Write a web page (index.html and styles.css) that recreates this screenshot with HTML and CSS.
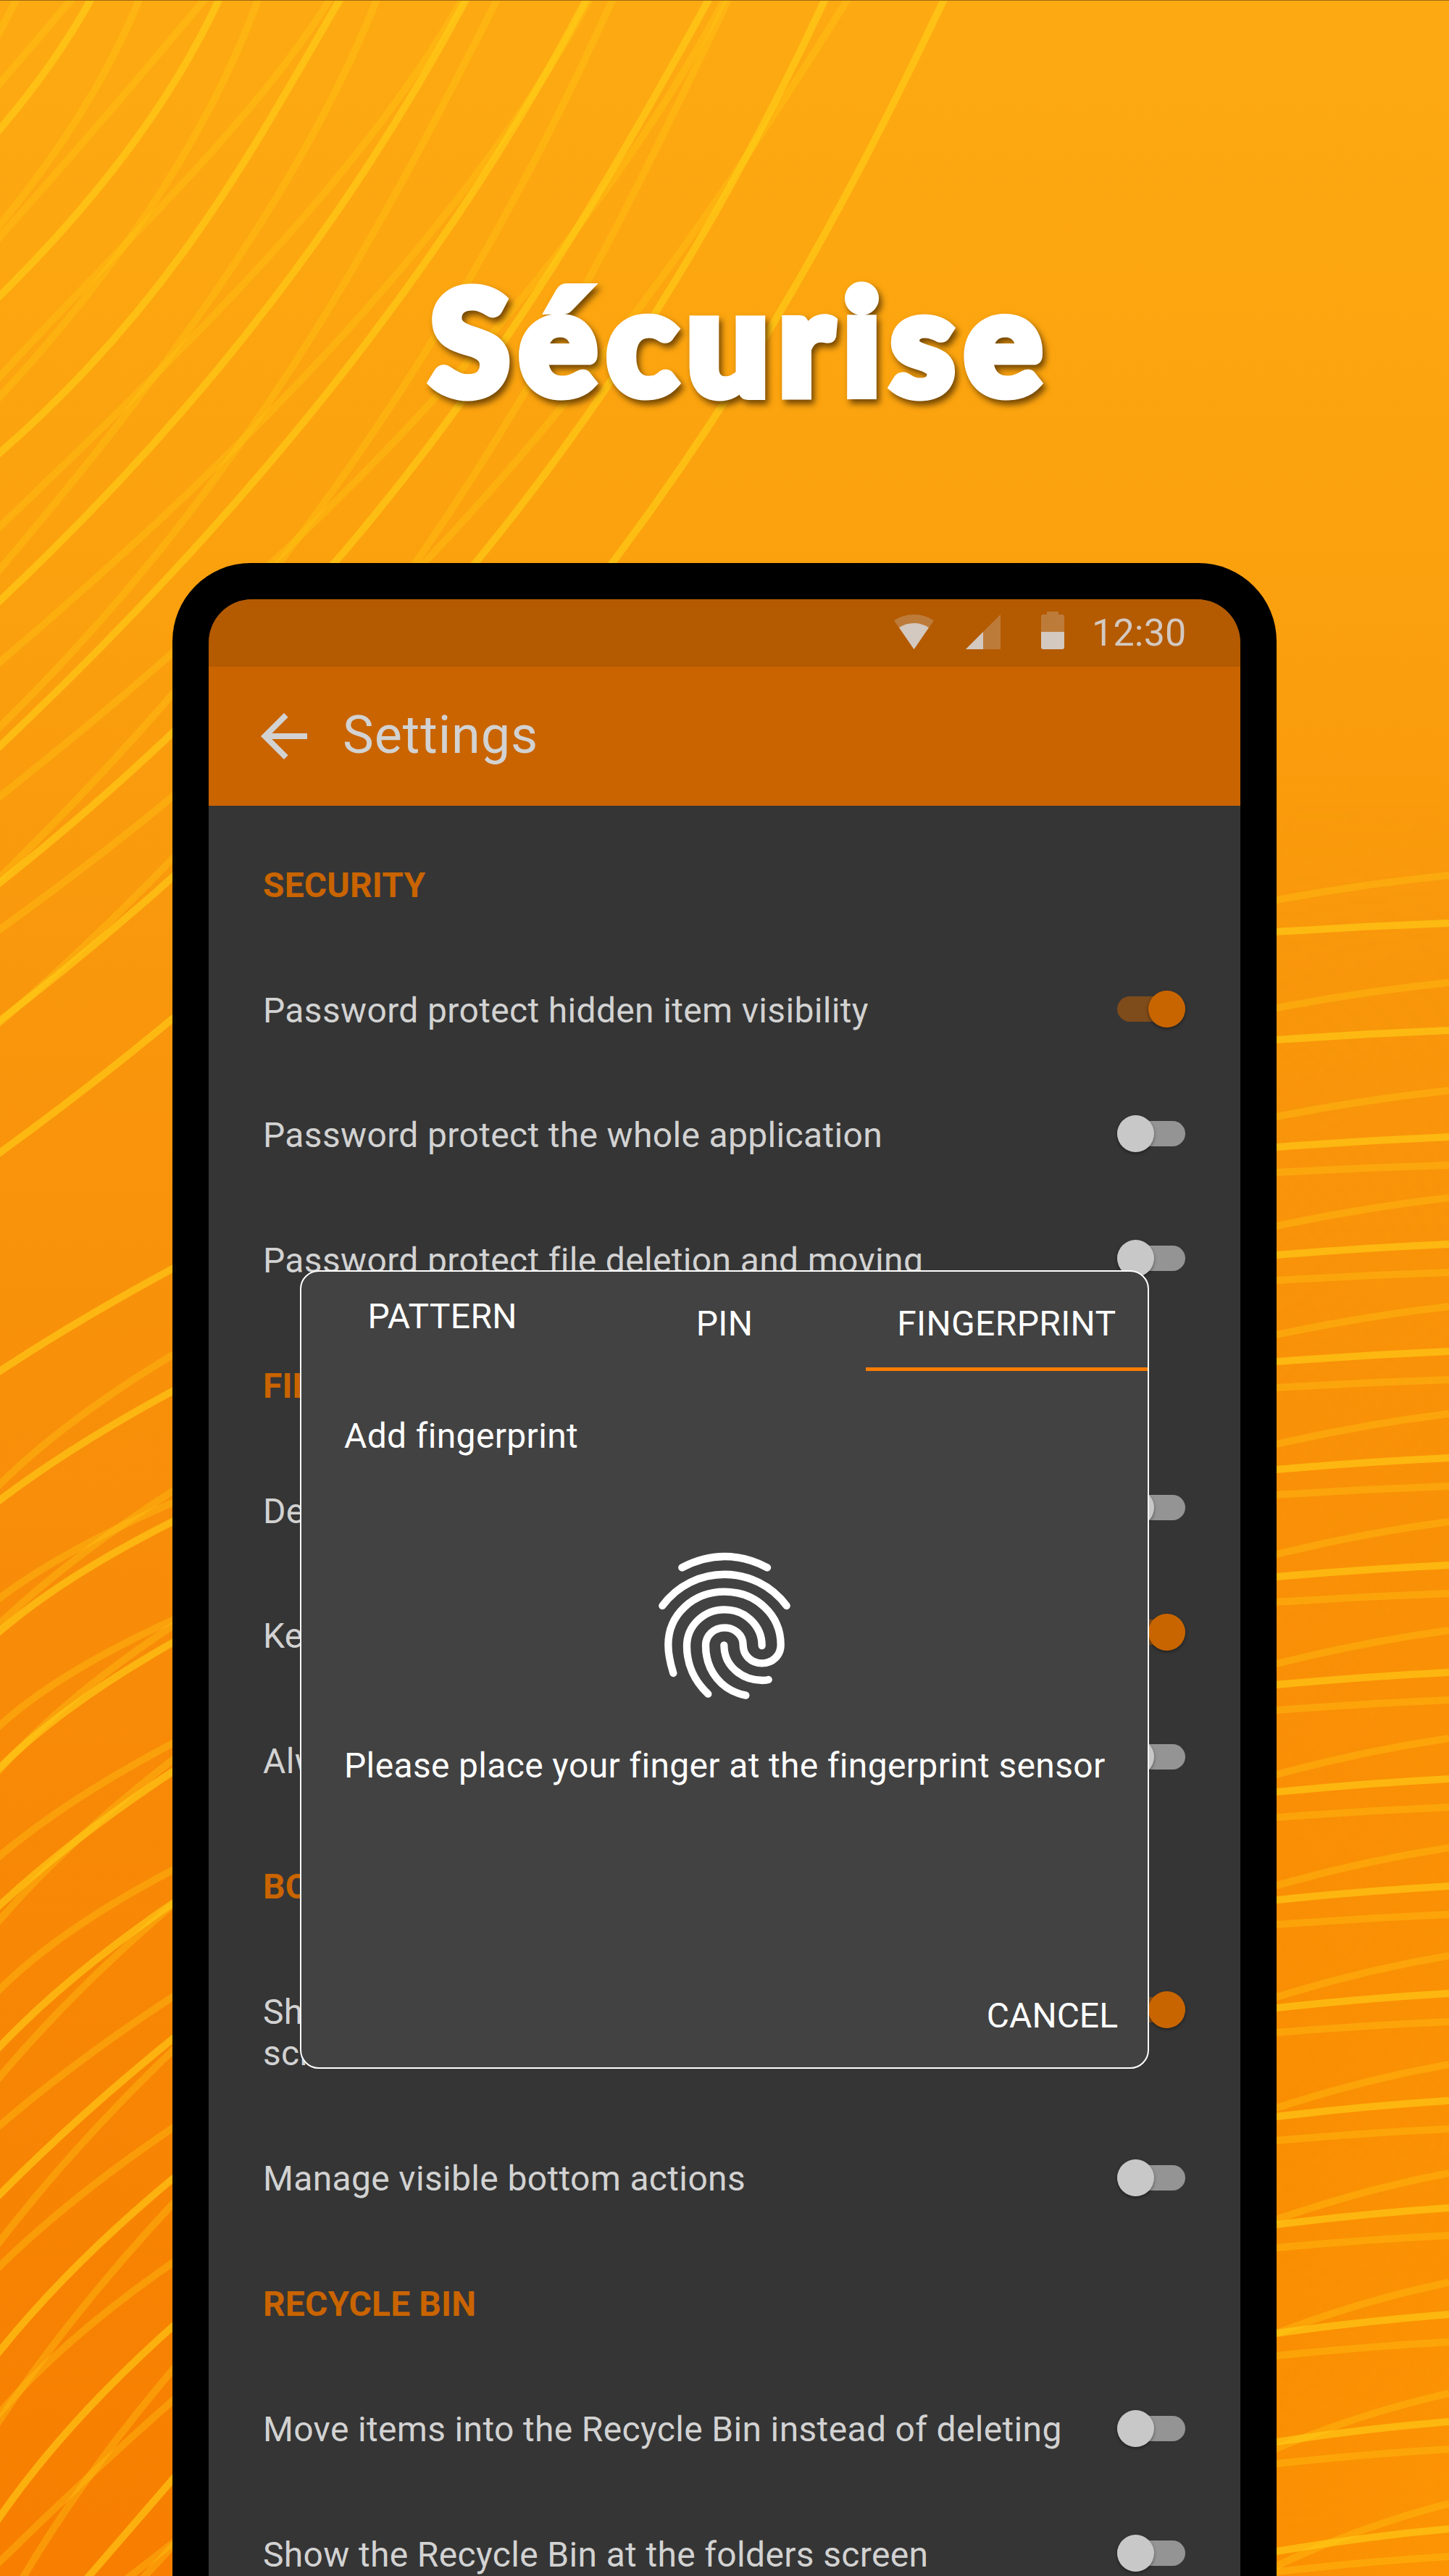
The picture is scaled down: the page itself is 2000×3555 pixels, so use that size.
FILE: index.html
```html
<!DOCTYPE html>
<html lang="fr">
<head>
<meta charset="utf-8">
<title>Sécurise</title>
<link rel="stylesheet" href="styles.css">
</head>
<body>
<main class="poster">
  <svg class="waves" viewBox="0 0 2000 3555" aria-hidden="true">
    <g id="waves-dim" class="waves-dim"></g>
    <g id="waves-bright" class="waves-bright"></g>
  </svg>

  <h1 class="headline">Sécurise</h1>

  <div class="phone">
    <div class="screen">
      <div class="statusbar">
        <svg class="status-icon wifi" viewBox="0 0 55 48"><path opacity=".3" d="M27.500 48 L0 8.500 Q12 0 27.500 0 Q43 0 55 8.500 Z"/><path d="M27.500 48 L7 18 Q16 12 27.500 12 Q39 12 48 18 Z"/></svg>
        <svg class="status-icon cell" viewBox="0 0 48 48"><path opacity=".3" d="M0 48 L48 0 V48 Z"/><path d="M0 48 L24 24 V48 Z"/></svg>
        <svg class="status-icon battery" viewBox="0 0 32 52"><path opacity=".3" d="M8 0 H24 V4 H29 Q32 4 32 7 V28 H0 V7 Q0 4 3 4 H8 Z"/><path d="M0 28 H32 V49 Q32 52 29 52 H3 Q0 52 0 49 Z"/></svg>
        <span class="clock">12:30</span>
      </div>
      <header class="toolbar">
        <svg class="back" viewBox="0 0 24 24"><path d="M20 11H7.830l5.590-5.590L12 4l-8 8 8 8 1.410-1.410L7.830 13H20v-2z"/></svg>
        <span class="toolbar-title">Settings</span>
      </header>

      <div class="settings">
        <div class="labels">
          <h2>SECURITY</h2>
          <p>Password protect hidden item visibility</p>
          <p>Password protect the whole application</p>
          <p>Password protect file deletion and moving</p>
          <h2>FILE</h2>
          <p>Del</p>
          <p>Kee</p>
          <p>Alw</p>
          <h2>BOT</h2>
          <p>Sho<br>scre</p>
          <p>Manage visible bottom actions</p>
          <h2>RECYCLE BIN</h2>
          <p>Move items into the Recycle Bin instead of deleting</p>
          <p>Show the Recycle Bin at the folders screen</p>
        </div>
        <div class="switches">
          <span class="switch on"></span>
          <span class="switch"></span>
          <span class="switch"></span>
          <span class="switch after-title"></span>
          <span class="switch on"></span>
          <span class="switch"></span>
          <span class="switch on after-bottom-title"></span>
          <span class="switch after-two-lines"></span>
          <span class="switch after-bin-title"></span>
          <span class="switch"></span>
        </div>
      </div>

      <section class="dialog">
        <div class="tabs">
          <span class="tab tab-raised">PATTERN</span>
          <span class="tab">PIN</span>
          <span class="tab active">FINGERPRINT</span>
        </div>
        <p class="dialog-title">Add fingerprint</p>
        <svg class="fingerprint" viewBox="0 0 840 840">
          <path d="M244 190Q420 98 597 190"/>
          <path d="M163 348C290 175 550 175 677 348"/>
          <path d="M208 627C195 585 187 550 187 510C187 385 290 290 420 290C550 290 653 385 653 510C653 553 620 586 575 586C530 586 497 553 497 510C497 470 463 439 420 439C377 439 342 470 342 512C342 620 410 700 508 719"/>
          <path d="M352 713C295 660 264 590 264 515C264 430 335 364 420 364C505 364 575 430 575 513"/>
          <path d="M418 511C418 600 495 657 577 657C590 657 597 656 602 654"/>
        </svg>
        <p class="dialog-hint">Please place your finger at the fingerprint sensor</p>
        <p class="dialog-action">CANCEL</p>
      </section>
    </div>
  </div>
</main>
<script src="waves.js"></script>
</body>
</html>
```

FILE: styles.css
```css
* { box-sizing: border-box; }

body {
  margin: 0;
  font-family: Roboto, sans-serif;
}

.poster {
  position: relative;
  width: 2000px;
  height: 3555px;
  overflow: hidden;
  border-top: 1px solid #9a6a14;
  background: linear-gradient(180deg, #fdaa12 0%, #fba20e 20%, #f9970c 38%, #f88d09 60%, #f77e00 100%);
}
.poster::before {
  content: "";
  position: absolute;
  inset: 0;
  background: linear-gradient(90deg, rgba(252, 152, 4, 0) 40%, rgba(252, 152, 4, .85) 100%);
  -webkit-mask-image: linear-gradient(180deg, transparent 30%, #000 100%);
  mask-image: linear-gradient(180deg, transparent 30%, #000 100%);
}

.waves {
  position: absolute;
  top: -1px;
  left: 0;
  width: 2000px;
  height: 3555px;
  fill: none;
}
.waves-dim { stroke: #ffc814; stroke-opacity: .36; stroke-width: 10; }
.waves-bright { stroke: #ffd018; stroke-opacity: .6; stroke-width: 10; }

.headline {
  position: relative;
  margin: 0;
  padding: 337px 0 0 45px;
  height: 776px;
  text-align: center;
  font: 900 200px/260px Lato, sans-serif;
  letter-spacing: 13.500px;
  color: #fff;
  -webkit-text-stroke: 13px #fff;
  paint-order: stroke fill;
  stroke-linejoin: round;
  filter: drop-shadow(4px 6px 4px rgba(70, 40, 0, .75));
}

.phone {
  position: relative;
  width: 1524px;
  height: 2900px;
  margin-left: 238px;
  padding: 50px 50px 0;
  border-radius: 108px 108px 0 0;
  background: #000;
}

.screen {
  position: relative;
  height: 100%;
  overflow: hidden;
  border-radius: 60px 60px 0 0;
  background: #353535;
}

.statusbar {
  display: flex;
  align-items: flex-end;
  height: 93px;
  padding: 0 76px 24px 0;
  justify-content: flex-end;
  background: #b45a00;
  color: #d3c9c0;
}
.status-icon { fill: #d3c9c0; }
.wifi { width: 55px; height: 48px; margin-right: 44px; }
.cell { width: 48px; height: 48px; margin-right: 56px; }
.battery { width: 32px; height: 52px; margin-right: 38px; }
.clock { width: 129px; font-size: 52px; line-height: 44px; letter-spacing: .2px; white-space: nowrap; }

.toolbar {
  display: flex;
  align-items: center;
  gap: 33px;
  height: 192px;
  padding-left: 56px;
  background: #c96400;
  color: #d2d2d2;
}
.back { width: 96px; height: 96px; fill: #d2d2d2; }
.toolbar-title { font-size: 72px; line-height: 84px; padding-bottom: 2px; letter-spacing: .900px; }

.settings {
  display: flex;
  justify-content: space-between;
  padding: 80.800px 76px 0 75px;
}
.labels {
  display: flex;
  flex-direction: column;
  gap: 115.200px;
  font-size: 48px;
  line-height: 57.600px;
  letter-spacing: .340px;
  color: #d2d2d2;
  white-space: nowrap;
}
.labels p, .labels h2 { margin: 0; }
.labels h2 {
  font-size: 48px;
  font-weight: 700;
  line-height: 57.600px;
  letter-spacing: .100px;
  color: #c96400;
}

.switches {
  display: flex;
  flex-direction: column;
  gap: 121px;
  padding-top: 174px;
}
.switch {
  display: flex;
  align-items: center;
  width: 94px;
  height: 51px;
}
.switch::before {
  content: "";
  flex: none;
  width: 94px;
  height: 35px;
  border-radius: 18px;
  background: #949494;
}
.switch::after {
  content: "";
  flex: none;
  width: 51px;
  height: 51px;
  margin-left: -94px;
  border-radius: 50%;
  background: #c8c8c8;
  box-shadow: 0 2px 4px rgba(0, 0, 0, .4);
}
.switch.on::before { background: #7e4b1b; }
.switch.on::after { margin-left: -51px; background: #c86500; }
.switch.after-title { margin-top: 172px; }
.switch.after-bottom-title { margin-top: 177px; }
.switch.after-two-lines { margin-top: 60px; }
.switch.after-bin-title { margin-top: 174px; }

.dialog {
  position: absolute;
  left: 126px;
  top: 926px;
  width: 1172px;
  height: 1102px;
  border: 2px solid #fff;
  border-radius: 26px;
  background: #424242;
  color: #fff;
  font-size: 48px;
  line-height: 57.600px;
  letter-spacing: .340px;
}
.dialog p { margin: 0; padding: 0 41px 0 59px; white-space: nowrap; }
.tabs { display: grid; grid-template-columns: 1fr 1fr 1fr; height: 137px; }
.tab { padding-top: 43px; text-align: center; }
.tab-raised { padding-top: 33px; }
.tab.active { border-bottom: 5px solid #f57c00; }
.dialog .dialog-title { margin-top: 61px; }
.fingerprint {
  display: block;
  width: 280px;
  height: 280px;
  margin: 89.600px 0 0 444px;
  fill: none;
  stroke: #fff;
  stroke-width: 31;
  stroke-linecap: round;
}
.dialog .dialog-hint { margin-top: 27.800px; }
.dialog .dialog-action { margin-top: 287px; text-align: right; letter-spacing: 0; }
```

FILE: waves.js
```js
// Background waves: each entry is a flat list of x,y points that one curve is fitted to.
const bright = [
  [125,0, 67,92, 0,178],
  [302,0, 179,204, 0,408],
  [469,0, 357,189, 268,330, 150,475, 0,625],
  [643,0, 536,184, 357,440, 130,700, 0,829],
  [808,0, 679,230, 500,474, 300,725, 0,1029],
  [978,0, 857,214, 640,551, 460,778, 238,1012, 0,1218],
  [1138,0, 1018,240, 826,551, 656,776, 238,1212, 0,1408],
  [1301,0, 1205,204, 1000,551, 846,776, 238,1407, 117,1503, 0,1590],
  [238,1751, 119,1818, 0,1892],
  [238,1920, 117,1990, 0,2070],
  [238,2100, 117,2167, 0,2251],
  [238,2267, 117,2343, 0,2439],
  [238,2445, 117,2531, 0,2629],
  [238,2627, 117,2717, 0,2824],
  [238,2814, 117,2917, 0,3028],
  [238,3007, 117,3116, 0,3244],
  [238,3211, 117,3329, 0,3473],
  [238,3422, 123,3555]
];
const dim = [
  [22,0, 0,43],
  [192,0, 107,163, 0,310],
  [357,0, 277,168, 134,393, 0,546],
  [520,0, 429,189, 348,327, 237,490, 116,643, 0,786],
  [686,0, 571,219, 464,413, 344,592, 268,700, 0,1003],
  [844,0, 741,219, 643,398, 482,638, 384,776, 238,965, 0,1209],
  [1004,0, 902,219, 804,398, 714,551, 580,776, 238,1182, 0,1412],
  [98,0, 0,115],
  [281,0, 214,82, 107,204, 0,327],
  [455,0, 357,133, 223,286, 89,423, 0,520],
  [638,0, 536,153, 420,301, 241,490, 134,597, 0,727],
  [812,0, 696,194, 571,347, 348,587, 247,700, 0,912],
  [1000,0, 857,225, 768,367, 679,459, 473,668, 393,765, 238,907, 0,1097],
  [1170,0, 1071,148, 946,347, 768,571, 589,765, 238,1106, 0,1280],
  [238,1870, 117,1950, 0,2048],
  [238,2074, 180,2100, 83,2151, 0,2205],
  [238,2236, 117,2298, 0,2381],
  [238,2406, 117,2476, 0,2561],
  [238,2581, 117,2652, 0,2745],
  [238,2756, 117,2840, 0,2933],
  [238,2937, 117,3025, 0,3127],
  [238,3123, 117,3215, 0,3329],
  [238,3313, 133,3408, 0,3535],
  [238,3510, 180,3555],
  [238,3514, 200,3555],
  [238,2058, 100,2155, 0,2240],
  [238,2244, 117,2332, 0,2442],
  [238,2429, 117,2530, 0,2649],
  [238,2629, 117,2740, 0,2866],
  [238,2830, 117,2954, 0,3093],
  [238,3042, 117,3181, 0,3339],
  [238,3271, 133,3404, 33,3555]
];

// Right-hand waves: height at the phone edge, height at the page edge.
const rightBright = [
  [1286,1274], [1435,1422], [1583,1569], [1732,1717], [1879,1865], [2028,2012], [2176,2160],
  [2325,2308], [2473,2455], [2622,2603], [2771,2751], [2921,2899], [3070,3047], [3220,3194],
  [3370,3342], [3521,3490]
];
const rightDim = [
  [1242,1208], [1391,1356], [1541,1505], [1618,1608], [1692,1653], [1767,1756], [1842,1803],
  [1915,1904], [1993,1951], [2063,2051], [2145,2100], [2211,2199], [2296,2250], [2360,2346],
  [2449,2399], [2508,2494], [2602,2550], [2656,2642], [2756,2699], [2805,2790], [2909,2849],
  [2954,2938], [3063,2999], [3102,3085], [3220,3150], [3251,3232], [3379,3303], [3400,3380],
  [3541,3455], [3549,3528]
];

// Least-squares fit of x as a polynomial in t.
function fit(ts, xs, degree) {
  const n = degree + 1;
  const m = Array.from({ length: n }, (_, r) => [
    ...Array.from({ length: n }, (_, c) => ts.reduce((s, t) => s + t ** (r + c), 0)),
    ts.reduce((s, t, i) => s + xs[i] * t ** r, 0)
  ]);
  for (let i = 0; i < n; i++) {
    for (let r = 0; r < n; r++) {
      if (r === i) continue;
      const k = m[r][i] / m[i][i];
      for (let c = i; c <= n; c++) m[r][c] -= k * m[i][c];
    }
  }
  return m.map((row, i) => row[n] / row[i]);
}

function smooth(flat) {
  const xs = flat.filter((_, i) => i % 2 === 0);
  const ys = flat.filter((_, i) => i % 2 === 1);
  const top = ys[0];
  const span = ys[ys.length - 1] - top;
  const ts = ys.map(y => (y - top) / span);
  const coef = fit(ts, xs, xs.length > 4 ? 3 : Math.min(2, xs.length - 1));
  const x = t => coef.reduce((s, k, i) => s + k * t ** i, 0);
  const slope = t => coef.reduce((s, k, i) => (i ? s + i * k * t ** (i - 1) : s), 0);
  // Run both ends a little past the edge so that no cut end shows.
  const over = 12 / span;
  const a = -over, b = 1 + over, h = (b - a) / 3;
  const y = t => top + t * span;
  return `M${x(a)} ${y(a)}C${x(a) + slope(a) * h} ${y(a + h)} ${x(b) - slope(b) * h} ${y(b - h)} ${x(b)} ${y(b)}`;
}

function draw(id, paths) {
  const group = document.getElementById(id);
  for (const d of paths) {
    const path = document.createElementNS('http://www.w3.org/2000/svg', 'path');
    path.setAttribute('d', d);
    group.append(path);
  }
}

const side = ([a, b]) => `M1750 ${a + (a - b) * 0.08}L1762 ${a}Q1881 ${b + (a - b) * 0.35} 2000 ${b}`;
draw('waves-dim', [...dim.map(smooth), ...rightDim.map(side)]);
draw('waves-bright', [...bright.map(smooth), ...rightBright.map(side)]);
```
